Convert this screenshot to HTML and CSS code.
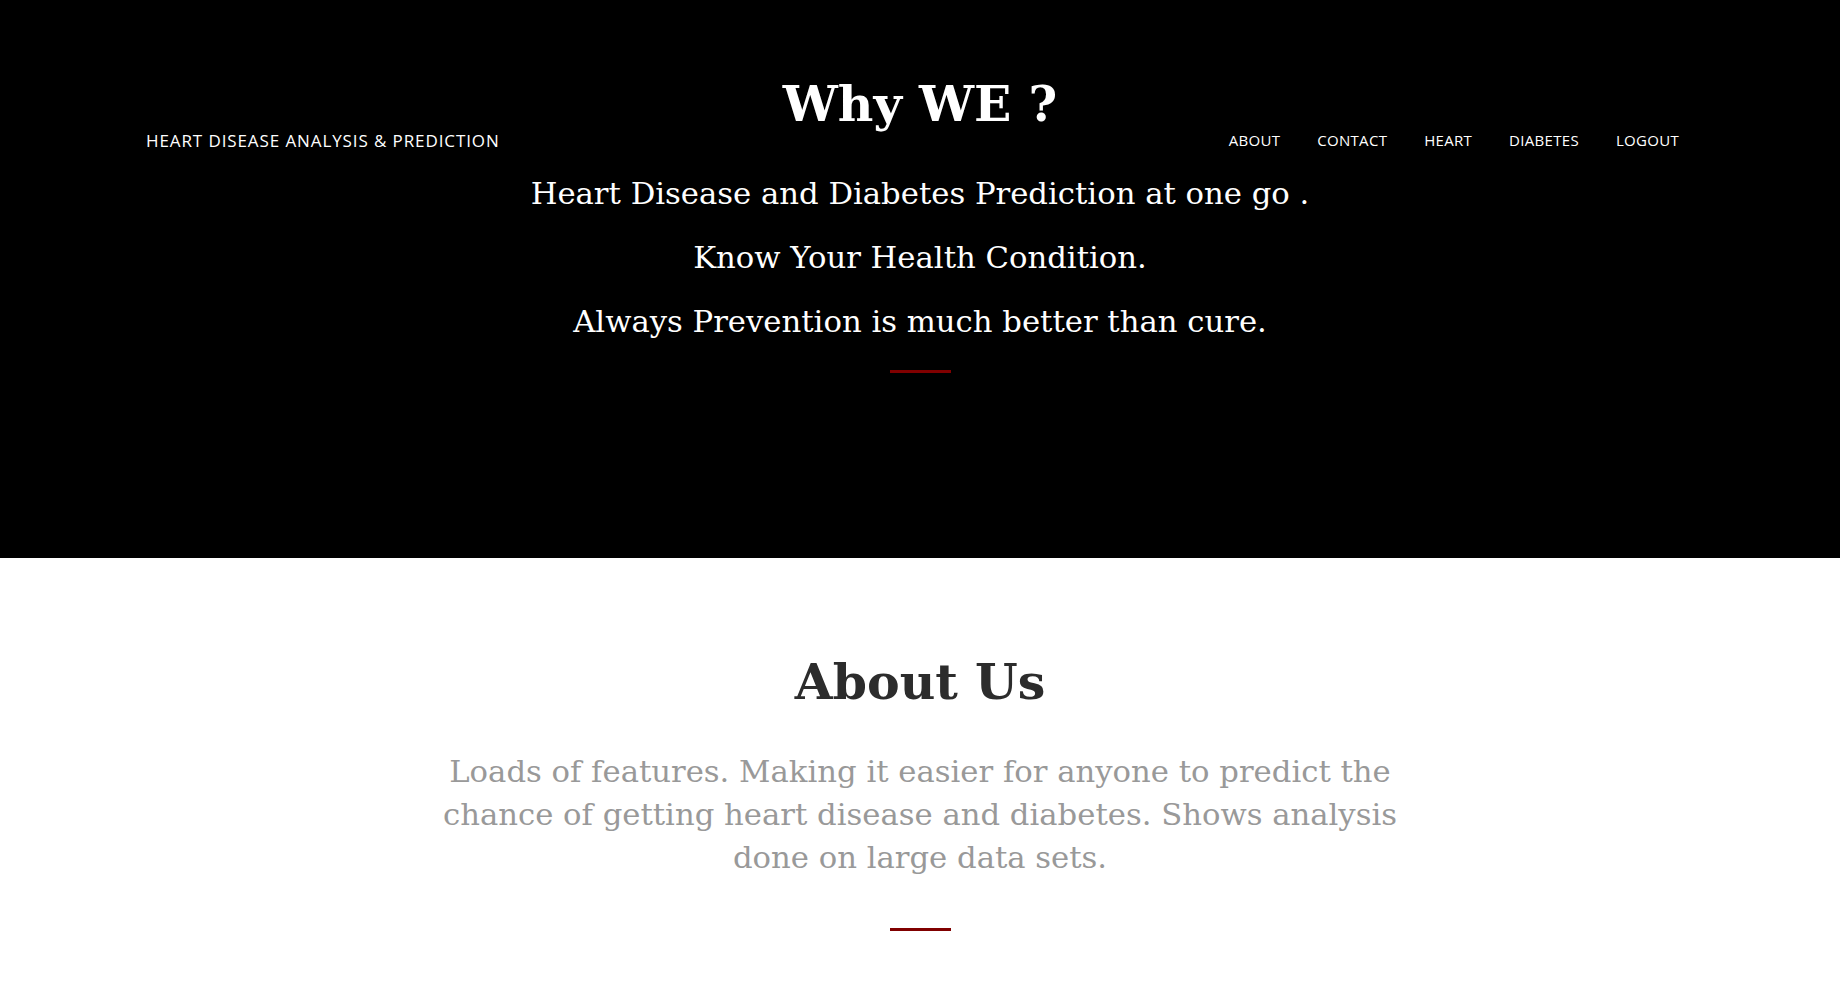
FILE: index.html
```html
<!DOCTYPE html>
<html>
<head>
<meta charset="utf-8">
<title>Heart Disease Analysis & Prediction</title>
<link rel="stylesheet" href="styles.css">
</head>
<body>
<header class="hero">
  <nav class="navbar">
    <a class="brand" href="#">HEART DISEASE ANALYSIS &amp; PREDICTION</a>
    <ul class="nav-links">
      <li><a href="#">ABOUT</a></li>
      <li><a href="#">CONTACT</a></li>
      <li><a href="#">HEART</a></li>
      <li><a href="#">DIABETES</a></li>
      <li><a href="#">LOGOUT</a></li>
    </ul>
  </nav>
  <div class="hero-content">
    <h1 class="hero-title">Why WE ?</h1>
    <p class="hero-line">Heart Disease and Diabetes Prediction at one go .</p>
    <p class="hero-line">Know Your Health Condition.</p>
    <p class="hero-line">Always Prevention is much better than cure.</p>
    <hr class="divider divider-hero">
  </div>
</header>
<section class="about">
  <h2 class="about-title">About Us</h2>
  <p class="about-text">Loads of features. Making it easier for anyone to predict the chance of getting heart disease and diabetes. Shows analysis done on large data sets.</p>
  <hr class="divider divider-about">
</section>
</body>
</html>
```
FILE: styles.css
```css
html, body {
  margin: 0;
  padding: 0;
}
body {
  background: #fff;
  font-family: "DejaVu Serif", serif;
}
.hero {
  position: relative;
  background: #000;
  height: 558px;
  color: #fff;
}
.navbar {
  position: absolute;
  top: 0;
  left: 0;
  right: 0;
  display: flex;
  justify-content: space-between;
  align-items: center;
  padding: 129px 161px 0 146px;
  height: 22px;
  font-family: "Open Sans", sans-serif;
}
.brand {
  color: #fff;
  text-decoration: none;
  font-size: 17px;
  letter-spacing: 0.9px;
}
.nav-links {
  list-style: none;
  margin: 0;
  padding: 0;
  display: flex;
  gap: 37px;
}
.nav-links a {
  color: #fff;
  text-decoration: none;
  font-size: 15px;
  letter-spacing: 0.3px;
}
.hero-content {
  padding-top: 74px;
  text-align: center;
}
.hero-title {
  margin: 0;
  font-size: 49px;
  line-height: 60px;
  font-weight: bold;
}
.hero-line {
  margin: 0;
  font-size: 30.7px;
  line-height: 64px;
}
.hero-line:first-of-type {
  margin-top: 28px;
}
.divider {
  width: 61px;
  height: 3px;
  border: 0;
  margin: 0 auto;
  background: #800000;
}
.divider-hero {
  margin-top: 16px;
}
.about {
  text-align: center;
  padding-top: 94px;
}
.about-title {
  margin: 0;
  font-size: 49px;
  line-height: 60px;
  font-weight: bold;
  color: #2c2c2c;
}
.about-text {
  margin: 38px auto 0;
  max-width: 970px;
  font-size: 30.7px;
  line-height: 43px;
  color: #999;
}
.divider-about {
  margin-top: 49px;
}
```
